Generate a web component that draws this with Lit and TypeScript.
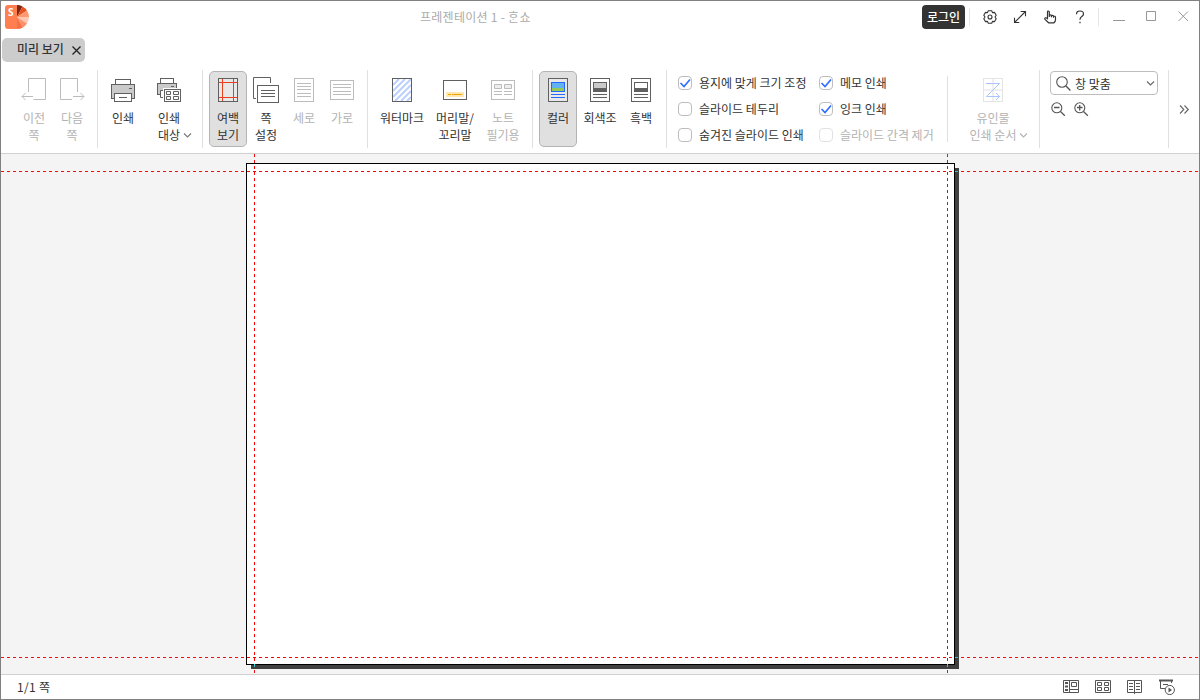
import { LitElement, html, css, svg } from "lit";
import { customElement } from "lit/decorators.js";
import { classMap } from "lit/directives/class-map.js";

const G = "#606060";
const L = "#bcbcbc";
const page = (s: string, fill = "none") =>
  svg`<rect x="4.5" y="2.5" width="19" height="23" stroke=${s} fill=${fill}/>`;

const icons: Record<string, unknown> = {
  prev: svg`<path d="M8.5 16V2.5H25.5V23.5H13.5" stroke=${L}/><path d="M13 20.5H2M5.5 17L2 20.5L5.5 24" stroke=${L}/>`,
  next: svg`<path d="M14 23.5H2.5V2.5H19.5V16" stroke=${L}/><path d="M15 20.5H26M22.5 17L26 20.5L22.5 24" stroke=${L}/>`,
  print: svg`<rect x="6.5" y="3.5" width="15" height="6" stroke=${G} fill="#fff"/><rect x="2.5" y="8.5" width="23" height="14" stroke=${G} fill="#cacaca"/><rect x="5.5" y="17.5" width="17" height="8" stroke=${G} fill="#fff"/><path d="M10 21.5H18M20 12.5H23" stroke=${G}/>`,
  target: svg`<rect x="5.5" y="2.5" width="13" height="6" stroke=${G} fill="#fff"/><rect x="2.5" y="7.5" width="19" height="11" stroke=${G} fill="#cacaca"/><path d="M9 14.5H5.5V21.5H9" stroke=${G} fill="#fff"/><path d="M16 10.5H19" stroke=${G}/><rect x="8" y="12" width="19" height="15" fill="#fff"/><rect x="9.5" y="13.5" width="16" height="12" stroke=${G}/><path d="M11.5 15.5h4v3h-4zM18.5 15.5h5v3h-5zM11.5 20.5h4v3h-4zM18.5 20.5h5v3h-5z" stroke=${G}/>`,
  margin: svg`${page(G, "#e8e8e8")}<path d="M8.5 3V25M19.5 3V25M5 6.5H23M5 21.5H23" stroke="#e8401c"/>`,
  setup: svg`<path d="M18.5 7V1.5H1.5V22.5H4" stroke=${G}/><rect x="5.5" y="9.5" width="21" height="17" stroke=${G}/><path d="M9 14.5H23M9 17.5H23M9 20.5H23" stroke=${G}/>`,
  portrait: svg`${page(L)}<path d="M7 7.5H21M7 10.5H21M7 13.5H21M7 17.5H21M7 20.5H21" stroke=${L}/>`,
  landscape: svg`<rect x="2.5" y="4.5" width="23" height="19" stroke=${L}/><path d="M5 8.5H23M5 11.5H23M5 15.5H23M5 18.5H23" stroke=${L}/>`,
  watermark: svg`<path d="M5 9L11 3M5 15L17 3M5 21L23 3M7 25L23 9M13 25L23 15M19 25L23 21" stroke="#bcd0ff" stroke-width="2"/>${page(G)}`,
  footer: svg`<rect x="2.5" y="4.5" width="23" height="19" stroke=${G}/><rect x="5" y="16" width="18" height="5" fill="#ffe7b0"/><path d="M7 18.5H10M11 18.5H21" stroke="#f2a200"/>`,
  note: svg`<rect x="2.5" y="4.5" width="23" height="19" stroke=${L}/><path d="M5.5 8.5h7v4h-7zM15.5 8.5h7v4h-7z" stroke=${L} fill="#eee"/><path d="M5 15.5H13M15 15.5H23M5 18.5H13M15 18.5H23" stroke=${L}/>`,
  color: svg`${page(G, "#e8e8e8")}<rect x="7" y="6" width="14" height="6" fill="#62b2f0"/><rect x="7" y="12" width="14" height="4" fill="#92c957"/><rect x="7.5" y="6.5" width="13" height="9" stroke="#2468ff"/><path d="M7 18.5H21M7 21.5H21" stroke="#2468ff"/>`,
  gray: svg`${page(G, "#fff")}<rect x="7" y="6" width="14" height="6" fill="#cacaca"/><rect x="7" y="12" width="14" height="4" fill=${G}/><rect x="7.5" y="6.5" width="13" height="9" stroke=${G}/><path d="M7 18.5H21M7 21.5H21" stroke=${G}/>`,
  mono: svg`${page(G, "#fff")}<rect x="7" y="12" width="14" height="4" fill=${G}/><rect x="7.5" y="6.5" width="13" height="9" stroke=${G}/><path d="M7 18.5H21M7 21.5H21" stroke=${G}/>`,
  order: svg`${page("#e4e4e4")}<path d="M14 3V25M5 14H23" stroke="#f0f0f0" stroke-width="2"/><path d="M7 7.5H20.5L7.5 20.5H20.5M17 17L20.5 20.5L17 24" stroke="#a9c4ff"/>`,
};

const chevron = svg`<path d="M1 1.5L4.5 5L8 1.5" stroke="currentColor" stroke-width="1.1"/>`;

interface Cmd {
  icon: string;
  lines: string[];
  w: number;
  off?: boolean;
  on?: boolean;
  drop?: boolean;
}

const groups: { w: number; pad: number; gap?: number; cmds: Cmd[] }[] = [
  { w: 97, pad: 14, cmds: [
    { icon: "prev", lines: ["이전", "쪽"], w: 38, off: true },
    { icon: "next", lines: ["다음", "쪽"], w: 38, off: true } ] },
  { w: 105, pad: 6, gap: 8, cmds: [
    { icon: "print", lines: ["인쇄"], w: 38 },
    { icon: "target", lines: ["인쇄", "대상"], w: 38, drop: true } ] },
  { w: 165, pad: 6, cmds: [
    { icon: "margin", lines: ["여백", "보기"], w: 38, on: true },
    { icon: "setup", lines: ["쪽", "설정"], w: 38 },
    { icon: "portrait", lines: ["세로"], w: 38, off: true },
    { icon: "landscape", lines: ["가로"], w: 38, off: true } ] },
  { w: 165, pad: 6, cmds: [
    { icon: "watermark", lines: ["워터마크"], w: 56 },
    { icon: "footer", lines: ["머리말/", "꼬리말"], w: 50 },
    { icon: "note", lines: ["노트", "필기용"], w: 46, off: true } ] },
  { w: 134, pad: 6, cmds: [
    { icon: "color", lines: ["컬러"], w: 38, on: true },
    { icon: "gray", lines: ["회색조"], w: 46 },
    { icon: "mono", lines: ["흑백"], w: 36 } ] },
];

const checks = [
  { t: "용지에 맞게 크기 조정", on: true },
  { t: "메모 인쇄", on: true },
  { t: "슬라이드 테두리" },
  { t: "잉크 인쇄", on: true },
  { t: "숨겨진 슬라이드 인쇄" },
  { t: "슬라이드 간격 제거", off: true },
] as { t: string; on?: boolean; off?: boolean }[];

@customElement("app-root")
export class AppRoot extends LitElement {
  static styles = css`
    :host {
      display: flex;
      flex-direction: column;
      box-sizing: border-box;
      width: 1200px;
      height: 700px;
      border: 1px solid #808080;
      background: #fff;
      color: #333;
      font: 12px/17px "Noto Sans CJK KR", sans-serif;
      white-space: nowrap;
      overflow: hidden;
    }
    * { box-sizing: border-box; }
    svg { display: block; fill: none; flex: none; }
    .title { display: flex; height: 32px; align-items: center; padding-left: 4px; flex: none; }
    .name { width: 502px; margin-left: 391px; padding-bottom: 2px; color: #ababab; letter-spacing: 0.27px; }
    .login { width: 43px; height: 24px; border-radius: 4px; background: #333; color: #fff; text-align: center; line-height: 23px; font-weight: 500; }
    .bar { width: 1px; height: 18px; background: #e6e6e6; }
    .tools { display: flex; align-items: center; }
    .b1 { margin: 0 11.5px 0 4px; }
    .b2 { margin: 0 14px 0 10.5px; }
    .t { margin-right: 14px; }
    .tq { margin-right: 0; }
    .tabs { height: 36px; padding: 5px 0 0 1px; flex: none; }
    .tab { display: flex; align-items: center; width: 83px; height: 24px; padding: 0 0 1px 15px; border-radius: 5px; background: #ccc; font-weight: 500; line-height: 22px; }
    .tab span { padding-bottom: 1px; }
    .tab svg { margin: 1px 0 0 7px; }
    .ribbon { display: flex; height: 85px; padding-top: 1px; border-bottom: 1px solid #d0d0d0; flex: none; }
    .group { display: flex; height: 78px; border-right: 1px solid #e0e0e0; padding-top: 1px; flex: none; }
    .cmd { display: flex; flex-direction: column; align-items: center; height: 76px; padding-top: 4px; border: 1px solid transparent; border-radius: 5px; flex: none; }
    .lines { margin-top: 5px; text-align: center; }
    .line { display: flex; justify-content: center; align-items: center; }
    .on { background: #e0e0e0; border-color: #b4b4b4; }
    .off { color: #b3b3b3; }
    .drop { margin: 1px -12px 0 3px; color: #777; }
    .off .drop { color: #b3b3b3; }
    .checks { display: grid; width: 281px; grid-template-columns: 141px 1fr; grid-auto-rows: 26px; padding-left: 11px; align-items: start; border: 0; padding-top: 4px; }
    .check { display: flex; align-items: center; height: 17px; }
    .box { width: 14px; height: 14px; border: 1px solid #bdbdbd; border-radius: 4px; margin-right: 7px; }
    .off .box { border-color: #e2e2e2; }
    .box svg { margin: -1px; }
    .order { width: 92px; padding-left: 26px; }
    .short { width: 1px; height: 66px; margin: 6px 0 0 -1px; background: #e0e0e0; flex: none; }
    .zoom { display: block; width: 129px; padding-left: 10px; }
    .combo { display: flex; align-items: center; width: 108px; height: 24px; padding: 0 2px 0 5px; border: 1px solid #bdbdbd; border-radius: 4px; }
    .combo span { flex: 1; padding-left: 4px; }
    .lens { display: flex; gap: 8px; padding: 7px 0 0 1px; }
    .more { margin: 35px 0 0 10px; }
    .canvas { position: relative; flex: 1; background: #f4f4f4; padding: 9px 0 0 245px; isolation: isolate; overflow: hidden; }
    .sheet { position: relative; width: 709px; height: 502px; background: #fff; border: 1px solid #000; }
    .shade { position: absolute; left: 250px; top: 14px; width: 708px; height: 501px; background: #404040; }
    .h, .v { position: absolute; mix-blend-mode: difference; }
    .h { left: 0; right: 0; height: 1px; background: repeating-linear-gradient(90deg, #0ff 0 3px, transparent 3px 6px); }
    .v { top: 0; bottom: 0; width: 1px; background: repeating-linear-gradient(180deg, #0ff 0 3px, transparent 3px 6px); }
    .h1 { top: 17px; }
    .h2 { top: 503px; }
    .v1 { left: 253px; }
    .v2 { left: 946px; }
    .status { display: flex; height: 25px; align-items: center; border-top: 1px solid #d0d0d0; padding: 0 23px 0 16px; flex: none; }
    .count { padding-bottom: 2px; letter-spacing: 0.3px; }
    .views { display: flex; gap: 15px; margin-left: auto; }
  `;

  private cmd(c: Cmd) {
    return html`<div class=${classMap({ cmd: true, on: !!c.on, off: !!c.off })} style="width:${c.w}px">
      <svg width="28" height="28">${icons[c.icon]}</svg>
      <div class="lines">
        ${c.lines.map((l, i) => html`<div class="line">${c.drop && i === c.lines.length - 1
          ? html`<span>${l}</span><svg class="drop" width="9" height="7">${chevron}</svg>`
          : l}</div>`)}
      </div>
    </div>`;
  }

  render() {
    return html`
      <div class="title">
        <svg width="24" height="24">
          <path d="M12 0H3Q0 0 0 3V21Q0 24 3 24H12Z" fill="#ff7f50"/>
          <path d="M12 12V0A12 12 0 0 1 17.5 1.4Z" fill="#7a2814"/>
          <path d="M12 12L17.5 1.4A12 12 0 0 1 22 5.4Z" fill="#e8501e"/>
          <path d="M12 12L22 5.4A12 12 0 0 1 24 12Z" fill="#ff9a70"/>
          <path d="M12 12H24A12 12 0 0 1 22 18.6Z" fill="#ffc8b0"/>
          <path d="M12 12L22 18.6A12 12 0 0 1 18 22.4Z" fill="#ff9068"/>
          <path d="M12 12L18 22.4A12 12 0 0 1 12 24Z" fill="#f47248"/>
          <text x="3" y="11" fill="#fff" font-size="10" font-weight="700" font-family="Open Sans, sans-serif">S</text>
        </svg>
        <div class="name">프레젠테이션 1 - ᄒᆞᆫ쇼</div>
        <div class="login">로그인</div>
        <div class="tools">
          <div class="bar b1"></div>
          <svg class="t" width="16" height="16" stroke="#333" stroke-width="1.1"><path d="M6.3 1.8H9.7L10.5 3.6L12.6 3.4L14.2 6.3L13 8L14.2 9.7L12.6 12.6L10.5 12.4L9.7 14.2H6.3L5.5 12.4L3.4 12.6L1.8 9.7L3 8L1.8 6.3L3.4 3.4L5.5 3.6Z" stroke-linejoin="round"/><circle cx="8" cy="8" r="2"/></svg>
          <svg class="t" width="16" height="16" stroke="#333" stroke-width="1.1"><path d="M2.5 13.5L13.5 2.5M8.7 2.5H13.5V7.3M2.5 8.7V13.5H7.3"/></svg>
          <svg class="t" width="16" height="16" stroke="#333" stroke-width="1.2" stroke-linejoin="round"><path d="M5.5 9.8V3Q5.5 2 6.4 2T7.3 3V7.5V6.2Q8.4 5.3 9.4 6.4V7.8V6.6Q10.5 5.8 11.5 7V8.2V7.4Q13.5 6.8 13.5 8.5V10.5Q13.5 12.5 12 13.8H6.6L3 10.4Q2.4 9.4 3.4 8.8Q4.3 8.5 5.5 9.8Z"/></svg>
          <svg class="tq" width="16" height="16" stroke="#333" stroke-width="1.2"><path d="M4.5 5.2Q4.5 2 8 2T11.5 5Q11.5 6.5 9.8 7.6T8 10.2V10.8M8 12.8V14.2"/></svg>
          <div class="bar b2"></div>
          <svg width="76" height="14" stroke="#999"><path d="M0 10.5H12M33.5 1.5H42.5V10.5H33.5ZM65.5 1.5L75 11M75 1.5L65.5 11"/></svg>
        </div>
      </div>
      <div class="tabs"><div class="tab"><span>미리 보기</span><svg width="11" height="11"><path d="M1.5 1.5L9.5 9.5M9.5 1.5L1.5 9.5" stroke="#222" stroke-width="1.3"/></svg></div></div>
      <div class="ribbon">
        ${groups.map((g) => html`<div class="group" style="width:${g.w}px;padding-left:${g.pad}px;gap:${g.gap ?? 0}px">${g.cmds.map((c) => this.cmd(c))}</div>`)}
        <div class="group checks">
          ${checks.map((c) => html`<div class=${classMap({ check: true, off: !!c.off })}>
            <div class="box">${c.on ? html`<svg width="14" height="14"><path d="M2.5 7L6 10.5L12 3.5" stroke="#2b6cff" stroke-width="1.6"/></svg>` : ""}</div>${c.t}</div>`)}
        </div>
        <div class="short"></div>
        <div class="group order">${this.cmd({ icon: "order", lines: ["유인물", "인쇄 순서"], w: 38, off: true, drop: true })}</div>
        <div class="group zoom">
          <div class="combo">
            <svg width="15" height="15" stroke="#555" stroke-width="1.1"><circle cx="6" cy="6" r="5.3"/><path d="M10 10L14.4 14.4" stroke-width="1.4"/></svg>
            <span>창 맞춤</span>
            <svg width="9" height="7" color="#666">${chevron}</svg>
          </div>
          <div class="lens">
            <svg width="15" height="15" stroke="#555" stroke-width="1.1"><circle cx="5.8" cy="5.8" r="5"/><path d="M9.5 9.5L13.8 13.8M3 5.5H8.5" stroke-width="1.3"/></svg>
            <svg width="15" height="15" stroke="#555" stroke-width="1.1"><circle cx="5.8" cy="5.8" r="5"/><path d="M9.5 9.5L13.8 13.8M3 5.5H8.5M5.7 3V8.5" stroke-width="1.3"/></svg>
          </div>
        </div>
        <svg class="more" width="11" height="9" stroke="#666" stroke-width="1.1"><path d="M1 .5L4.8 4.5L1 8.5M5.5 .5L9.3 4.5L5.5 8.5"/></svg>
      </div>
      <div class="canvas">
        <div class="shade"></div>
        <div class="sheet"></div>
        <div class="h h1"></div><div class="h h2"></div>
        <div class="v v1"></div><div class="v v2"></div>
      </div>
      <div class="status">
        <span class="count">1/1 쪽</span>
        <div class="views">
          <svg width="17" height="16" stroke="#555"><path d="M.5 1.5H15.5V13.5H.5ZM6.5 2V13M8.5 3.5H13.5V7.5H8.5ZM7 10.5H15"/><path d="M2 4H5M2 7.5H5M2 11H5" stroke-width="2"/></svg>
          <svg width="17" height="16" stroke="#555"><path d="M.5 1.5H15.5V13.5H.5ZM2.5 3.5H6.5V6.5H2.5ZM9.5 3.5H13.5V6.5H9.5ZM2.5 8.5H6.5V11.5H2.5ZM9.5 8.5H13.5V11.5H9.5Z"/></svg>
          <svg width="17" height="16" stroke="#555"><path d="M.5 1.5H14.5V13.5H.5ZM7.5 1V15M2 4.5H6M2 7.5H6M2 10.5H6M9 4.5H13M9 7.5H13M9 10.5H13"/></svg>
          <svg width="17" height="17" stroke="#555"><path d="M0 1.5H14" stroke-width="2"/><path d="M1.5 2V9.5H6M12.5 2V4M4 5.5H9"/><circle cx="10.8" cy="11" r="4.6" fill="#fff"/><path d="M9.5 8.5L13 11L9.5 13.5Z" fill="#555" stroke="none"/></svg>
        </div>
      </div>`;
  }
}
